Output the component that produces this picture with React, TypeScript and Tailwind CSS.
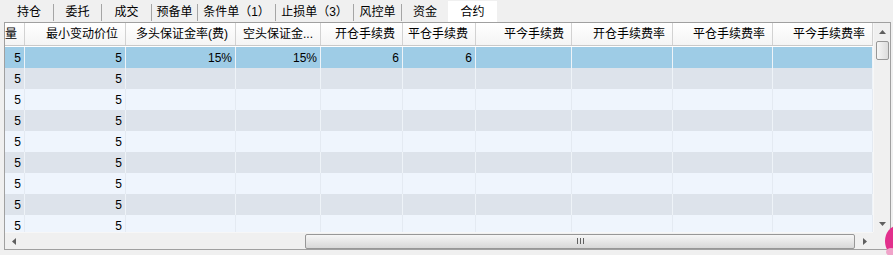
import React from "react";

const tabs = [
  { label: "持仓", w: "w-[48px]" },
  { label: "委托", w: "w-[47px]" },
  { label: "成交", w: "w-[49px]" },
  { label: "预备单", w: "w-[45px]" },
  { label: "条件单（1）", w: "w-[77px]" },
  { label: "止损单（3）", w: "w-[77px]" },
  { label: "风控单", w: "w-[47px]" },
  { label: "资金", w: "w-[46px]" },
];

const cols = [
  { title: "量", w: "w-[20px]" },
  { title: "最小变动价位", w: "w-[101px]" },
  { title: "多头保证金率(费)", w: "w-[110px]" },
  { title: "空头保证金...", w: "w-[85px]" },
  { title: "开仓手续费", w: "w-[82px]" },
  { title: "平仓手续费", w: "w-[73px]" },
  { title: "平今手续费", w: "w-[96px]" },
  { title: "开仓手续费率", w: "w-[101px]" },
  { title: "平仓手续费率", w: "w-[100px]" },
  { title: "平今手续费率", w: "w-[100px]" },
];

const rows = Array.from({ length: 9 }, (_, i) =>
  i === 0
    ? ["5", "5", "15%", "15%", "6", "6", "", "", "", ""]
    : ["5", "5", "", "", "", "", "", "", "", ""]
);

const Arrow = ({ dir }: { dir: "up" | "down" | "left" | "right" }) => {
  const pts = {
    up: "0,4 3.5,0 7,4",
    down: "0,0 3.5,4 7,0",
    left: "4,0 0,3.5 4,7",
    right: "0,0 4,3.5 0,7",
  }[dir];
  const vertical = dir === "up" || dir === "down";
  return (
    <svg
      width={vertical ? 7 : 4}
      height={vertical ? 4 : 7}
      viewBox={vertical ? "0 0 7 4" : "0 0 4 7"}
    >
      <polygon points={pts} fill="#5f5f5f" />
    </svg>
  );
};

export default function App() {
  return (
    <div className="relative w-[893px] h-[255px] overflow-hidden bg-[#f0f0f0] text-[12px] text-black [font-family:'Liberation_Sans','Noto_Sans_CJK_SC',sans-serif]">
      {/* tab strip */}
      <div className="flex h-[22px] pl-[5px]">
        {tabs.map((t, i) => (
          <React.Fragment key={t.label}>
            <div className={`${t.w} flex items-center justify-center pt-[1px] whitespace-nowrap`}>
              {t.label}
            </div>
            {i < tabs.length - 1 && <div className="w-px h-[17px] self-center mt-[2px] bg-[#a5a5a5]" />}
          </React.Fragment>
        ))}
        <div className="w-[49px] mt-[1px] bg-white flex items-center justify-center pt-[1px]">合约</div>
      </div>

      {/* grid */}
      <div className="ml-[4px] w-[887px] h-[228px] border border-[#a0a0a0] flex flex-col">
        <div className="flex h-[209px]">
          <div className="w-[868px] flex flex-col">
            <div className="flex h-[23px] border-b border-[#c9c9c9] bg-linear-to-b from-white to-[#f4f4f4]">
              {cols.map((c) => (
                <div
                  key={c.title}
                  className={`${c.w} shrink-0 border-r border-[#d2d2d2] flex items-center justify-end pr-[7px] overflow-hidden whitespace-nowrap`}
                >
                  {c.title}
                </div>
              ))}
            </div>
            <div className="flex-1 overflow-hidden bg-white pt-[1px]">
              {rows.map((r, i) => {
                const bg =
                  i === 0 ? "bg-[#9ecce6]" : i % 2 === 1 ? "bg-[#dde3eb]" : "bg-[#eff5fd]";
                const line = i % 2 === 0 && i !== 0 ? "border-[#e4eaf2]" : "border-[#eef3f8]";
                return (
                  <div key={i} className={`flex h-[21px] ${bg}`}>
                    {r.map((v, j) => (
                      <div
                        key={j}
                        className={`${cols[j].w} shrink-0 border-r ${line} flex items-center justify-end pr-[3px] whitespace-nowrap`}
                      >
                        {v}
                      </div>
                    ))}
                  </div>
                );
              })}
            </div>
          </div>

          {/* vertical scrollbar */}
          <div className="w-[17px] flex flex-col bg-[#f0f0f0] border-l border-[#f7f7f7]">
            <div className="h-[17px] flex items-center justify-center">
              <Arrow dir="up" />
            </div>
            <div className="mt-[1px] ml-[2px] w-[13px] h-[19px] rounded-[2px] border border-[#979797] bg-linear-to-r from-[#f6f6f6] to-[#dcdcdc]" />
            <div className="flex-1" />
            <div className="h-[17px] flex items-center justify-center">
              <Arrow dir="down" />
            </div>
          </div>
        </div>

        {/* horizontal scrollbar */}
        <div className="flex h-[17px]">
          <div className="w-[868px] flex bg-[#f0f0f0] border-t border-[#f7f7f7]">
            <div className="w-[17px] flex items-center justify-center">
              <Arrow dir="left" />
            </div>
            <div className="flex-1 flex items-center">
              <div className="ml-[283px] w-[550px] h-[15px] rounded-[2px] border border-[#979797] bg-linear-to-b from-[#f6f6f6] to-[#d8d8d8] flex items-center justify-center gap-[2px]">
                <div className="w-px h-[6px] bg-[#606060]" />
                <div className="w-px h-[6px] bg-[#606060]" />
                <div className="w-px h-[6px] bg-[#606060]" />
              </div>
            </div>
            <div className="w-[17px] flex items-center justify-center">
              <Arrow dir="right" />
            </div>
          </div>
          <div className="w-[17px] bg-[#f0f0f0]" />
        </div>
      </div>

      {/* stray desktop ornament in the corner */}
      <svg className="absolute left-[882px] top-[222px]" width="11" height="33" viewBox="0 0 11 33">
        <ellipse cx="15" cy="19" rx="12" ry="15" fill="#e2308c" />
        <ellipse cx="9" cy="30" rx="5" ry="4" fill="#f0a3c9" />
      </svg>
    </div>
  );
}
